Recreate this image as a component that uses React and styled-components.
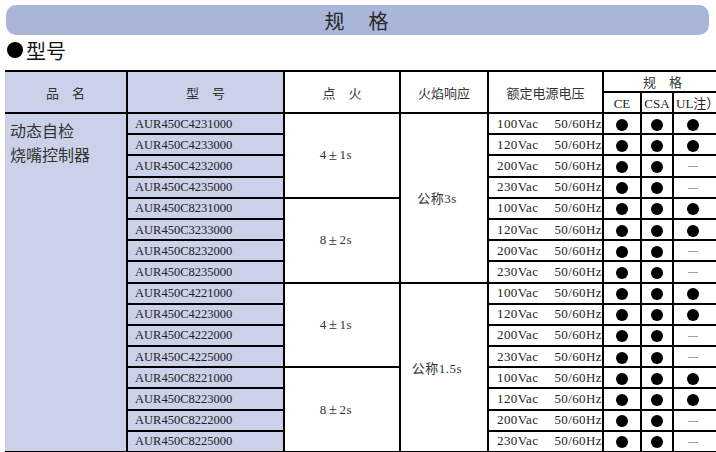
import styled, { createGlobalStyle } from 'styled-components';

const GlobalStyle = createGlobalStyle`
  html, body {
    margin: 0;
    padding: 0;
    background: #ffffff;
    overflow: hidden;
  }
  body {
    font-family: "Liberation Serif", "Noto Sans CJK SC", serif;
    color: #222222;
  }
`;

// Spec data
const groups = [
  { ignition: ['4', '1s'], codes: ['AUR450C4231000', 'AUR450C4233000', 'AUR450C4232000', 'AUR450C4235000'] },
  { ignition: ['8', '2s'], codes: ['AUR450C8231000', 'AUR450C3233000', 'AUR450C8232000', 'AUR450C8235000'] },
  { ignition: ['4', '1s'], codes: ['AUR450C4221000', 'AUR450C4223000', 'AUR450C4222000', 'AUR450C4225000'] },
  { ignition: ['8', '2s'], codes: ['AUR450C8221000', 'AUR450C8223000', 'AUR450C8222000', 'AUR450C8225000'] },
];
const responses = ['公称3s', '公称1.5s'];
const voltages = ['100Vac', '120Vac', '200Vac', '230Vac'];

const Page = styled.div`
  width: 716px;
  height: 452px;
  overflow: hidden;
  padding: 5px 0 0 5px;
  box-sizing: border-box;
`;

const TitleBar = styled.div`
  height: 30px;
  margin: 0 7px 0 1px;
  border-radius: 10px;
  background: #a9b5d9;
  display: flex;
  align-items: center;
  justify-content: center;
  font-family: "Noto Sans CJK SC", sans-serif;
  font-size: 20px;
  color: #2a2a2a;
  letter-spacing: 2px;
`;

const Section = styled.div`
  display: flex;
  align-items: center;
  gap: 3px;
  height: 30px;
  padding-left: 2px;
  font-family: "Noto Sans CJK SC", sans-serif;
  font-size: 20px;
  color: #111111;
`;

const Bullet = styled.span`
  width: 16px;
  height: 16px;
  border-radius: 50%;
  background: #000000;
`;

const Table = styled.table`
  width: 716px;
  border-collapse: collapse;
  table-layout: fixed;
  border-top: 2px solid #000;
  border-bottom: 2px solid #000;
  margin-top: 5px;
`;

const Cell = styled.td`
  border: 2px solid #000;
  padding: 0 0 0 ${(p) => p.$pad || 0}px;
  background: ${(p) => (p.$shade ? '#cbd1e8' : '#ffffff')};
  text-align: ${(p) => p.$align || 'center'};
  vertical-align: ${(p) => p.$valign || 'middle'};
  font-size: 13px;
  white-space: nowrap;
  overflow: hidden;
  &:first-child { border-left: none; }
  &:last-child { border-right: none; }
`;

const HeadCell = styled(Cell).attrs({ as: 'th' })`
  font-weight: normal;
  font-family: "Noto Sans CJK SC", sans-serif;
  color: #333333;
`;

const Row = styled.tr`
  height: ${(p) => p.$h}px;
`;

const Code = styled.span`
  padding-left: 7px;
  font-size: 12.5px;
  color: #222;
`;

const Product = styled.div`
  padding: 4px 0 0 5px;
  font-family: "Noto Sans CJK SC", sans-serif;
  font-size: 16px;
  line-height: 24px;
  color: #333;
`;

const Middle = styled.span`
  display: inline-flex;
  align-items: center;
  gap: ${(p) => p.$gap || 0}px;
  padding-right: ${(p) => p.$shift || 0}px;
  font-family: "Liberation Serif", "Noto Sans CJK SC", serif;
  font-size: 13px;
  letter-spacing: 0.5px;
  color: #333;
`;

const PlusMinus = styled.span`
  font-size: 15px;
  line-height: 1;
`;

const Volt = styled.span`
  display: flex;
  gap: 16px;
  padding-left: 8px;
  font-size: 13px;
  letter-spacing: 0.4px;
  color: #222;
`;

const Dot = styled.span`
  display: inline-block;
  width: 12px;
  height: 12px;
  border-radius: 50%;
  background: #000;
  vertical-align: middle;
`;

const Dash = styled.span`
  display: inline-block;
  width: 10px;
  height: 1px;
  margin-left: 1px;
  background: #a0a0a0;
  vertical-align: middle;
`;

const Latin = styled.span`
  font-family: "Liberation Serif", "Noto Sans CJK SC", serif;
  font-size: 13px;
  color: #222;
`;

export default function App() {
  const rows = [];
  groups.forEach((g, gi) => {
    g.codes.forEach((code, ci) => {
      const first = gi === 0 && ci === 0;
      const ul = ci < 2;
      rows.push(
        <Row key={code} $h={21.2}>
          {first && (
            <Cell $shade rowSpan={16} $align="left" $valign="top">
              <Product>
                动态自检
                <br />
                烧嘴控制器
              </Product>
            </Cell>
          )}
          <Cell $shade $align="left">
            <Code>{code}</Code>
          </Cell>
          {ci === 0 && (
            <Cell rowSpan={4}>
              <Middle $shift={12} $gap={2}>
                {g.ignition[0]}
                <PlusMinus>±</PlusMinus>
                {g.ignition[1]}
              </Middle>
            </Cell>
          )}
          {ci === 0 && gi % 2 === 0 && (
            <Cell rowSpan={8}>
              <Middle $shift={14}>{responses[gi / 2]}</Middle>
            </Cell>
          )}
          <Cell $align="left">
            <Volt>
              <span>{voltages[ci]}</span>
              <span>50/60Hz</span>
            </Volt>
          </Cell>
          <Cell>
            <Dot />
          </Cell>
          <Cell>
            <Dot />
          </Cell>
          <Cell $align="left" $pad={13}>{ul ? <Dot /> : <Dash />}</Cell>
        </Row>
      );
    });
  });

  return (
    <>
      <GlobalStyle />
      <Page>
        <TitleBar>规　格</TitleBar>
        <Section>
          <Bullet />
          型号
        </Section>
        <Table>
          <colgroup>
            <col style={{ width: 122 }} />
            <col style={{ width: 157 }} />
            <col style={{ width: 116 }} />
            <col style={{ width: 88 }} />
            <col style={{ width: 115 }} />
            <col style={{ width: 38 }} />
            <col style={{ width: 32 }} />
            <col style={{ width: 48 }} />
          </colgroup>
          <thead>
            <Row $h={21}>
              <HeadCell $shade rowSpan={2}>品　名</HeadCell>
              <HeadCell $shade rowSpan={2}>型　号</HeadCell>
              <HeadCell rowSpan={2}>点　火</HeadCell>
              <HeadCell rowSpan={2}>火焰响应</HeadCell>
              <HeadCell rowSpan={2}>额定电源电压</HeadCell>
              <HeadCell colSpan={3}>规　格</HeadCell>
            </Row>
            <Row $h={19}>
              <HeadCell><Latin>CE</Latin></HeadCell>
              <HeadCell><Latin>CSA</Latin></HeadCell>
              <HeadCell $align="left" $pad={2}><Latin>UL注）</Latin></HeadCell>
            </Row>
          </thead>
          <tbody>{rows}</tbody>
        </Table>
      </Page>
    </>
  );
}
